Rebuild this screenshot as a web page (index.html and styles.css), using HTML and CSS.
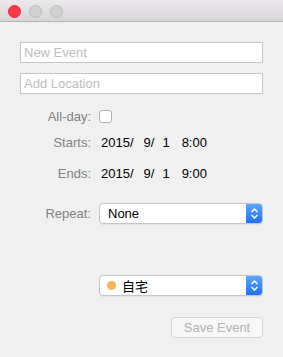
FILE: index.html
```
<!DOCTYPE html>
<html lang="en">
<head>
  <meta charset="UTF-8">
  <title>New Event</title>
  <link rel="stylesheet" href="styles.css">
</head>
<body>
  <div class="window">
    <div class="titlebar">
      <span class="light red"></span>
      <span class="light"></span>
      <span class="light"></span>
    </div>

    <div class="content">
      <input type="text" class="field" placeholder="New Event">
      <input type="text" class="field second" placeholder="Add Location">

      <div class="row allday">
        <label class="label">All-day:</label>
        <span class="checkbox"></span>
      </div>
      <div class="row starts">
        <span class="label">Starts:</span>
        <span class="date"><span>2015/</span><span class="m">9/</span><span class="d">1</span><span class="t">8:00</span></span>
      </div>
      <div class="row ends">
        <span class="label">Ends:</span>
        <span class="date"><span>2015/</span><span class="m">9/</span><span class="d">1</span><span class="t">9:00</span></span>
      </div>
      <div class="row repeat">
        <span class="label">Repeat:</span>
        <div class="popup">
          <span class="value">None</span>
          <span class="stepper">
            <svg width="9" height="13" viewBox="0 0 9 13"><path d="M1.5 5 L4.5 2 L7.5 5 M1.5 8 L4.5 11 L7.5 8" fill="none" stroke="#fff" stroke-width="1.4"/></svg>
          </span>
        </div>
      </div>
      <div class="row calendar">
        <span class="label"></span>
        <div class="popup">
          <span class="value"><span class="dot"></span>自宅</span>
          <span class="stepper">
            <svg width="9" height="13" viewBox="0 0 9 13"><path d="M1.5 5 L4.5 2 L7.5 5 M1.5 8 L4.5 11 L7.5 8" fill="none" stroke="#fff" stroke-width="1.4"/></svg>
          </span>
        </div>
      </div>
      <div class="actions">
        <button class="save" disabled>Save Event</button>
      </div>
    </div>
  </div>
</body>
</html>
```
FILE: styles.css
```
body {
  margin: 0;
  font-family: "Liberation Sans", Arial, "Noto Sans CJK SC", sans-serif;
  font-size: 13px;
  background: #f0f0f0;
}
.window {
  width: 283px;
  height: 357px;
  background: #f0f0f0;
}
.titlebar {
  height: 21px;
  background: linear-gradient(to bottom, #ebe9eb, #d6d4d6);
  border-bottom: 1px solid #b4b4b4;
  display: flex;
  align-items: center;
  gap: 8px;
  padding-left: 8px;
}
.light {
  width: 11px;
  height: 11px;
  border-radius: 50%;
  background: #d0d0d0;
  border: 0.5px solid #bdbdbd;
  margin-top: 1px;
}
.light.red {
  background: #fd3a45;
  border-color: #e2283a;
}
.content {
  padding: 20px 20px 0 20px;
}
.field {
  display: block;
  box-sizing: border-box;
  width: 243px;
  height: 21px;
  margin: 0;
  padding: 0 3px;
  border: 1px solid #c4c4c4;
  background: #fff;
  font-family: inherit;
  font-size: 13px;
  outline: none;
}
.field::placeholder {
  color: #bdbdbd;
}
.field.second {
  margin-top: 10px;
}
.row {
  display: flex;
  align-items: center;
  height: 20px;
}
.label {
  width: 71px;
  margin-right: 8px;
  text-align: right;
  color: #808080;
  flex-shrink: 0;
}
.allday { margin-top: 12px; }
.starts { margin-top: 6px; }
.ends { margin-top: 11px; }
.repeat { margin-top: 20px; height: 21px; }
.calendar { margin-top: 51px; height: 21px; }
.checkbox {
  box-sizing: border-box;
  width: 13px;
  height: 13px;
  border: 1px solid #b0b0b0;
  border-radius: 3px;
  background: #fff;
}
.date {
  color: #000;
  padding-left: 2px;
}
.date .m { margin-left: 10px; }
.date .d { margin-left: 8px; }
.date .t { margin-left: 12px; }
.popup {
  box-sizing: border-box;
  width: 164px;
  height: 21px;
  display: flex;
  align-items: stretch;
  background: #fff;
  border: 1px solid #c6c6c6;
  border-radius: 4px;
  box-shadow: 0 1px 0 rgba(0, 0, 0, 0.05);
  overflow: hidden;
}
.popup .value {
  flex: 1;
  display: flex;
  align-items: center;
  padding-left: 8px;
  color: #000;
}
.stepper {
  width: 17px;
  margin: -1px -1px -1px 0;
  background: linear-gradient(to bottom, #5eabfd, #1b6ef6);
  border-radius: 0 4px 4px 0;
  display: flex;
  align-items: center;
  justify-content: center;
}
.dot {
  width: 9px;
  height: 9px;
  border-radius: 50%;
  background: #fdb256;
  margin-right: 6px;
  margin-left: -1px;
}
.actions {
  display: flex;
  justify-content: flex-end;
  margin-top: 21px;
}
.save {
  box-sizing: border-box;
  width: 92px;
  height: 21px;
  background: #f7f7f7;
  border: 1px solid #d4d4d4;
  border-radius: 4px;
  color: #b3b3b3;
  font-family: inherit;
  font-size: 13px;
  padding: 0;
}
```
